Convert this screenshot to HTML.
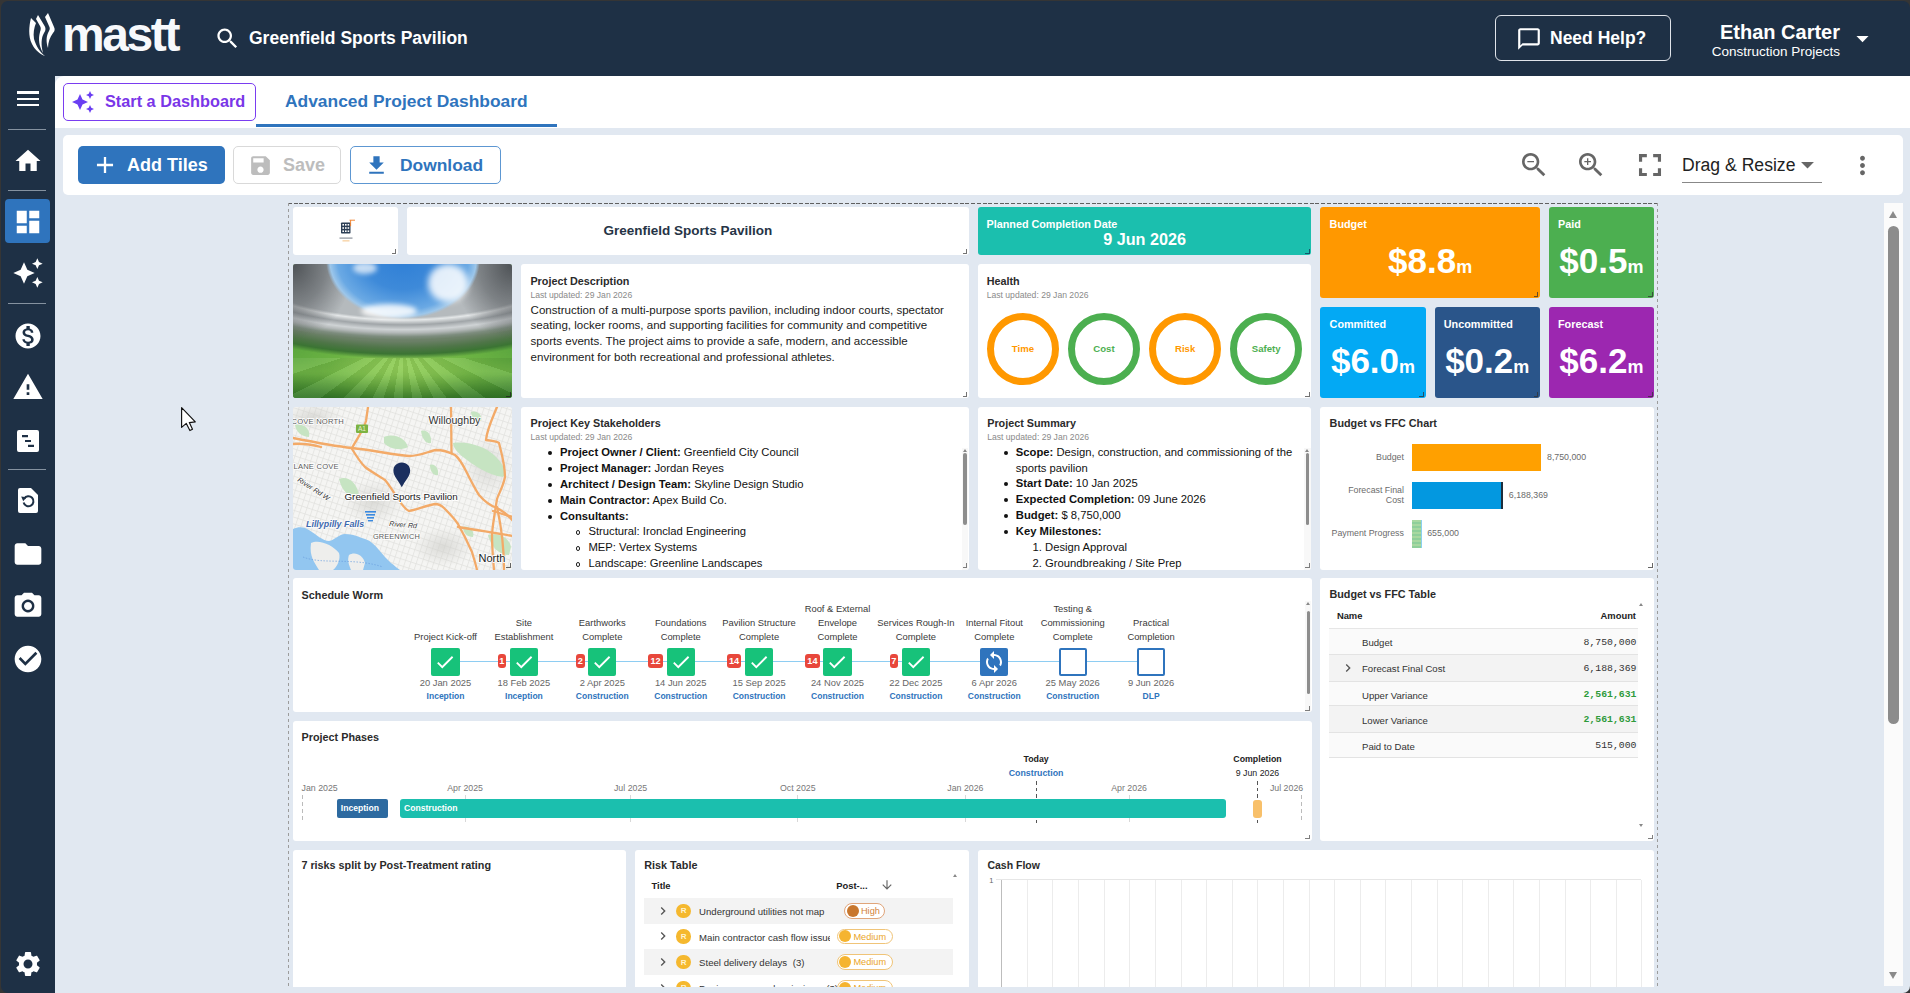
<!DOCTYPE html>
<html><head><meta charset="utf-8">
<style>
*{box-sizing:border-box;margin:0;padding:0}
html,body{width:1910px;height:993px;overflow:hidden;background:#353535;font-family:"Liberation Sans",sans-serif}
#app{position:absolute;left:0;top:0;width:1910px;height:993px;background:#e1e8f1;overflow:hidden}
#frame{position:absolute;left:1px;top:1px;width:1909px;height:992px;border-radius:7px;box-shadow:0 0 0 30px #353535;z-index:100;pointer-events:none}
.abs{position:absolute}
#hdr{position:absolute;left:0;top:0;width:1910px;height:76px;background:#1e3045}
#side{position:absolute;left:0;top:76px;width:55px;height:917px;background:#1e3045}
svg{display:block}
.ic{position:absolute}
.div{position:absolute;left:8px;width:38px;height:1px;background:#8592a0}
#tabs{position:absolute;left:55px;top:76px;width:1855px;height:52px;background:#fff;border-top-left-radius:9px}
#tb{position:absolute;left:63px;top:135px;width:1840px;height:60px;background:#fff;border-radius:5px}
.btn{position:absolute;border-radius:4px;font-size:18px;font-weight:bold;display:flex;align-items:center}
#dash{display:none}
.t{position:absolute;background:#fff;border-radius:3px;overflow:hidden}
.ttl{position:absolute;left:9px;top:10px;font-size:12px;font-weight:bold;color:#2b2b2b}
.upd{position:absolute;left:9px;top:25px;font-size:9.5px;color:#8a8a8a}
.tx{position:absolute;white-space:nowrap}
.rz{position:absolute;right:1.5px;bottom:1.5px;width:4.8px;height:4.8px;border-right:1.8px solid #555;border-bottom:1.8px solid #555;opacity:0.75}
</style></head><body>
<div id="app">
 <div id="hdr">
  <svg class="ic" style="left:28px;top:12px" width="30" height="46" viewBox="0 0 30 46">
   <path d="M3 6 C1 14 0 24 4 32 C7 38 12 42 17 44 C12 40 8 34 6 27 C5 21 6 16 8 11 Z" fill="#fff"/>
   <path d="M8 7 L10 3 L16 13 C18 16 18 18 16 21 C13 26 13 33 15 41 C11 34 10 27 12 20 C13 17 13 16 12 14 Z" fill="#fff"/>
   <path d="M17 5 L20 1 L26 15 C27 17 27 19 25 21 C22 25 20 30 20 36 C18 30 18 24 21 19 C22 17 22 16 21 14 Z" fill="#fff"/>
  </svg>
  <div class="abs" style="left:62px;top:7px;font-size:48px;font-weight:bold;color:#f7f9fc;letter-spacing:-2.4px;line-height:56px">mastt</div>
  <svg class="ic" style="left:214px;top:25px" width="27" height="27" viewBox="0 0 24 24"><path fill="#fff" d="M15.5 14h-.79l-.28-.27C15.41 12.59 16 11.11 16 9.5 16 5.91 13.09 3 9.5 3S3 5.91 3 9.5 5.91 16 9.5 16c1.61 0 3.09-.59 4.23-1.57l.27.28v.79l5 4.99L20.49 19l-4.99-5zm-6 0C7.01 14 5 11.99 5 9.5S7.01 5 9.5 5 14 7.01 14 9.5 11.99 14 9.5 14z"/></svg>
  <div class="abs" style="left:249px;top:27px;font-size:17.5px;font-weight:bold;color:#fff;line-height:22px">Greenfield Sports Pavilion</div>
  <div class="abs" style="left:1495px;top:15px;width:176px;height:46px;border:1.2px solid #e0e4ea;border-radius:6px"></div>
  <svg class="ic" style="left:1516px;top:26px" width="26" height="26" viewBox="0 0 24 24"><path fill="#fff" d="M20 2H4c-1.1 0-2 .9-2 2v18l4-4h14c1.1 0 2-.9 2-2V4c0-1.1-.9-2-2-2zm0 14H6l-2 2V4h16v12z"/></svg>
  <div class="abs" style="left:1550px;top:27px;font-size:17.5px;font-weight:bold;color:#fff;line-height:22px">Need Help?</div>
  <div class="abs" style="right:70px;top:20px;font-size:20px;font-weight:bold;color:#fff;line-height:24px;text-align:right">Ethan Carter</div>
  <div class="abs" style="right:70px;top:44px;font-size:13.5px;color:#fff;line-height:16px;text-align:right;">Construction Projects</div>
  <svg class="ic" style="left:1848px;top:24px" width="29" height="29" viewBox="0 0 24 24"><path fill="#fff" d="M7 10l5 5 5-5z"/></svg>
 </div>
 <div id="side">
  <div class="abs" style="left:17px;top:15px;width:22px;height:2.6px;background:#fff"></div><div class="abs" style="left:17px;top:21.5px;width:22px;height:2.6px;background:#fff"></div><div class="abs" style="left:17px;top:27.6px;width:22px;height:2.6px;background:#fff"></div>
  <div class="div" style="top:53px"></div>
  <svg class="ic" style="left:13px;top:70px" width="30" height="30" viewBox="0 0 24 24"><path fill="#fff" d="M10 20v-6h4v6h5v-8h3L12 3 2 12h3v8z"/></svg>
  <div class="div" style="top:114px"></div>
  <div class="abs" style="left:5px;top:123px;width:45px;height:44px;background:#2f74bd;border-radius:4px"></div>
  <svg class="ic" style="left:13px;top:131px" width="30" height="30" viewBox="0 0 24 24"><path fill="#fff" d="M3 13h8V3H3v10zm0 8h8v-6H3v6zm10 0h8V11h-8v10zm0-18v6h8V3h-8z"/></svg>
  <svg class="ic" style="left:12px;top:181px" width="32" height="32" viewBox="0 0 24 24"><path fill="#fff" d="M19 9l1.25-2.75L23 5l-2.75-1.25L19 1l-1.25 2.75L15 5l2.75 1.25L19 9zm-7.5.5L9 4 6.5 9.5 1 12l5.5 2.5L9 20l2.5-5.5L17 12l-5.5-2.5zM19 15l-1.25 2.75L15 19l2.75 1.25L19 23l1.25-2.75L23 19l-2.75-1.25L19 15z"/></svg>
  <div class="div" style="top:227px"></div>
  <svg class="ic" style="left:13px;top:245px" width="30" height="30" viewBox="0 0 24 24"><path fill="#fff" d="M12 2C6.48 2 2 6.48 2 12s4.48 10 10 10 10-4.48 10-10S17.52 2 12 2zm1.41 16.09V20h-2.67v-1.93c-1.71-.36-3.16-1.46-3.27-3.4h1.96c.1 1.05.82 1.87 2.650 1.87 1.96 0 2.4-.98 2.4-1.59 0-.83-.44-1.61-2.67-2.14-2.48-.6-4.18-1.62-4.18-3.67 0-1.72 1.39-2.84 3.11-3.21V4h2.67v1.95c1.86.45 2.79 1.86 2.85 3.39H14.3c-.05-1.11-.64-1.870-2.22-1.87-1.5 0-2.4.68-2.4 1.64 0 .84.65 1.39 2.67 1.91s4.18 1.39 4.18 3.91c-.01 1.83-1.38 2.83-3.12 3.16z"/></svg>
  <svg class="ic" style="left:12px;top:295px" width="32" height="32" viewBox="0 0 24 24"><path fill="#fff" d="M1 21h22L12 2 1 21zm12-3h-2v-2h2v2zm0-4h-2v-4h2v4z"/></svg>
  <svg class="ic" style="left:17px;top:354px" width="22" height="22" viewBox="0 0 22 22"><path fill="#fff" fill-rule="evenodd" d="M2 0h18a2 2 0 0 1 2 2v18a2 2 0 0 1-2 2H2a2 2 0 0 1-2-2V2a2 2 0 0 1 2-2zM5 5v2.2h6V5zM8 9.9v2.2h6V9.9zM11 14.8v2.2h6v-2.2z"/></svg>
  <div class="div" style="top:393px"></div>
  <svg class="ic" style="left:18px;top:411.5px" width="20" height="25" viewBox="0 0 20 25"><path fill="#fff" d="M2 0h11l7 7v16a2 2 0 0 1-2 2H2a2 2 0 0 1-2-2V2a2 2 0 0 1 2-2z"/><path d="M6.2 10.6 A5 5 0 1 1 5.6 14.5" fill="none" stroke="#1e3045" stroke-width="2"/><path d="M3.2 8.6 L8.6 9.2 L5.2 13.2 Z" fill="#1e3045"/></svg>
  <svg class="ic" style="left:12px;top:462px" width="32" height="32" viewBox="0 0 24 24"><path fill="#fff" d="M10 4H4c-1.1 0-1.99.9-1.99 2L2 18c0 1.1.9 2 2 2h16c1.1 0 2-.9 2-2V8c0-1.1-.9-2-2-2h-8l-2-2z"/></svg>
  <svg class="ic" style="left:12px;top:514px" width="32" height="32" viewBox="0 0 24 24"><path fill="#fff" fill-rule="evenodd" d="M9 2L7.17 4H4c-1.1 0-2 .9-2 2v12c0 1.1.9 2 2 2h16c1.1 0 2-.9 2-2V6c0-1.1-.9-2-2-2h-3.17L15 2H9zm3 5.2a4.8 4.8 0 1 0 0.001 0zm0 1.8a3 3 0 1 1-0.001 0z"/></svg>
  <svg class="ic" style="left:12px;top:567px" width="32" height="32" viewBox="0 0 24 24"><path fill="#fff" d="M12 2C6.48 2 2 6.48 2 12s4.48 10 10 10 10-4.48 10-10S17.52 2 12 2zm-2 15l-5-5 1.41-1.41L10 14.17l7.59-7.59L19 8l-9 9z"/></svg>
  <svg class="ic" style="left:13px;top:873px" width="30" height="30" viewBox="0 0 24 24"><path fill="#fff" d="M19.14 12.94c.04-.3.06-.61.06-.94 0-.32-.02-.64-.07-.94l2.030-1.58c.18-.14.23-.41.12-.61l-1.92-3.32c-.12-.22-.37-.29-.59-.22l-2.39.96c-.5-.38-1.03-.7-1.62-.94l-.36-2.54c-.04-.24-.24-.41-.48-.41h-3.84c-.24 0-.43.17-.47.41l-.36 2.540c-.59.24-1.13.57-1.62.94l-2.39-.96c-.22-.08-.47 0-.59.22L2.74 8.87c-.12.21-.08.47.12.61l2.03 1.58c-.05.3-.09.63-.09.94s.02.64.07.94l-2.03 1.58c-.18.14-.23.41-.12.61l1.92 3.32c.12.22.37.29.59.22l2.39-.96c.5.38 1.03.7 1.62.94l.36 2.54c.05.24.24.41.48.41h3.84c.24 0 .44-.17.47-.41l.36-2.54c.59-.24 1.13-.56 1.62-.94l2.39.96c.22.08.47 0 .59-.22l1.92-3.32c.12-.22.07-.47-.12-.61l-2.01-1.58zM12 15.6c-1.98 0-3.6-1.62-3.6-3.6s1.62-3.6 3.6-3.6 3.6 1.62 3.6 3.6-1.62 3.6-3.6 3.6z"/></svg>
 </div>
 <div id="tabs"></div>
 <div class="abs" style="left:63px;top:83px;width:193px;height:38px;border:1.3px solid #7a3df0;border-radius:5px"></div>
 <svg class="ic" style="left:71px;top:90px" width="24" height="24" viewBox="0 0 24 24"><path fill="#6a3ef2" d="M19 9l1.25-2.75L23 5l-2.75-1.25L19 1l-1.25 2.75L15 5l2.75 1.25L19 9zm-7.5.5L9 4 6.5 9.5 1 12l5.5 2.5L9 20l2.5-5.5L17 12l-5.5-2.5zM19 15l-1.25 2.75L15 19l2.75 1.25L19 23l1.25-2.75L23 19l-2.75-1.25L19 15z"/></svg>
 <div class="abs" style="left:105px;top:91px;font-size:16.3px;font-weight:bold;color:#7a36e8;line-height:20px">Start a Dashboard</div>
 <div class="abs" style="left:285px;top:91px;font-size:17.4px;font-weight:bold;color:#2f74bd;line-height:20px">Advanced Project Dashboard</div>
 <div class="abs" style="left:256px;top:124px;width:301px;height:3px;background:#2f74bd"></div>
 <div id="tb"></div>
 <div class="abs" style="left:78px;top:146px;width:147px;height:38px;background:#2f74bd;border-radius:5px"></div>
 <svg class="ic" style="left:93px;top:153px" width="24" height="24" viewBox="0 0 24 24"><path fill="#fff" d="M19 13h-6v6h-2v-6H5v-2h6V5h2v6h6v2z" transform="translate(12 12) scale(1.15 1.15) translate(-12 -12)"/></svg>
 <div class="abs" style="left:127px;top:155px;font-size:18px;font-weight:bold;color:#fff;line-height:20px">Add Tiles</div>
 <div class="abs" style="left:233px;top:146px;width:108px;height:38px;border:1px solid #d9d9d9;border-radius:5px"></div>
 <svg class="ic" style="left:248px;top:153px" width="25" height="25" viewBox="0 0 24 24"><path fill="#bdbdbd" d="M17 3H5c-1.11 0-2 .9-2 2v14c0 1.1.89 2 2 2h14c1.1 0 2-.9 2-2V7l-4-4zm-5 16c-1.66 0-3-1.34-3-3s1.34-3 3-3 3 1.34 3 3-1.34 3-3 3zm3-10H5V5h10v4z"/></svg>
 <div class="abs" style="left:283px;top:155px;font-size:18px;font-weight:bold;color:#bdbdbd;line-height:20px">Save</div>
 <div class="abs" style="left:350px;top:146px;width:151px;height:38px;border:1px solid #5d97d2;border-radius:5px"></div>
 <svg class="ic" style="left:364px;top:153px" width="25" height="25" viewBox="0 0 24 24"><path fill="#2f74bd" d="M19 9h-4V3H9v6H5l7 7 7-7zM5 18v2h14v-2H5z"/></svg>
 <div class="abs" style="left:400px;top:155px;font-size:17.4px;font-weight:bold;color:#2f74bd;line-height:20px">Download</div>
 <svg class="ic" style="left:1518px;top:149px" width="32" height="32" viewBox="0 0 24 24"><path fill="#666" d="M15.5 14h-.79l-.28-.27C15.41 12.59 16 11.11 16 9.5 16 5.91 13.09 3 9.5 3S3 5.910 3 9.5 5.91 16 9.5 16c1.61 0 3.09-.59 4.23-1.57l.27.28v.79l5 4.99L20.49 19l-4.99-5zm-6 0C7.01 14 5 11.99 5 9.5S7.01 5 9.5 5 14 7.01 14 9.5 11.99 14 9.5 14zM7 9h5v1H7z"/></svg>
 <svg class="ic" style="left:1575px;top:149px" width="32" height="32" viewBox="0 0 24 24"><path fill="#666" d="M15.5 14h-.79l-.28-.27C15.41 12.59 16 11.11 16 9.5 16 5.91 13.09 3 9.5 3S3 5.91 3 9.5 5.91 16 9.5 16c1.61 0 3.09-.59 4.23-1.57l.27.28v.79l5 4.99L20.49 19l-4.99-5zm-6 0C7.01 14 5 11.99 5 9.5S7.01 5 9.5 5 14 7.01 14 9.5 11.99 14 9.5 14zm2.5-4h-2v2H9v-2H7V9h2V7h1v2h2v1z"/></svg>
 <svg class="ic" style="left:1629px;top:144px" width="42" height="42" viewBox="0 0 24 24"><path fill="#666" d="M7 14H5v5h5v-2H7v-3zm-2-4h2V7h3V5H5v5zm12 7h-3v2h5v-5h-2v3zM14 5v2h3v3h2V5h-5z" transform="translate(12 12) scale(0.9) translate(-12 -12)"/></svg>
 <div class="abs" style="left:1682px;top:155px;font-size:17.6px;color:#222;line-height:20px">Drag &amp; Resize</div>
 <svg class="ic" style="left:1791.7px;top:149.4px" width="31" height="31" viewBox="0 0 24 24"><path fill="#666" d="M7 10l5 5 5-5z"/></svg>
 <div class="abs" style="left:1682px;top:182px;width:140px;height:1px;background:#888"></div>
 <svg class="ic" style="left:1848px;top:151px" width="29" height="29" viewBox="0 0 24 24"><path fill="#666" d="M12 8c1.1 0 2-.9 2-2s-.9-2-2-2-2 .9-2 2 .9 2 2 2zm0 2c-1.1 0-2 .9-2 2s.9 2 2 2 2-.9 2-2-.9-2-2-2zm0 6c-1.1 0-2 .9-2 2s.9 2 2 2 2-.9 2-2-.9-2-2-2z"/></svg>
 <div id="dash"></div>
<div class="t" style="left:292.50px;top:207.10px;width:105.40px;height:48.32px;background:#fff;">
<svg class="abs" style="left:44px;top:12px" width="22" height="26" viewBox="0 0 22 26">
<rect x="4" y="3.5" width="9.5" height="11" rx="0.8" fill="#2c3e55"/>
<g fill="#fff"><rect x="5.4" y="5" width="1.6" height="1.6"/><rect x="8" y="5" width="1.6" height="1.6"/><rect x="10.6" y="5" width="1.6" height="1.6"/>
<rect x="5.4" y="8.2" width="1.6" height="1.6"/><rect x="8" y="8.2" width="1.6" height="1.6"/><rect x="10.6" y="8.2" width="1.6" height="1.6"/>
<rect x="5.4" y="11.4" width="1.6" height="1.6"/><rect x="8" y="11.4" width="1.6" height="1.6"/><rect x="10.6" y="11.4" width="1.6" height="1.6"/></g>
<path d="M12.5 1.2h5.5M13.6 1.2v6" stroke="#f07a20" stroke-width="0.9"/>
<rect x="2.5" y="18.5" width="13" height="1.2" fill="#55606e" opacity="0.7"/>
<rect x="5.5" y="21.5" width="7" height="0.8" fill="#f0a040" opacity="0.8"/>
</svg>
<div class="rz" style="border-color:#444"></div>
</div>
<div class="t" style="left:406.70px;top:207.10px;width:562.20px;height:48.32px;background:#fff;">
<div class="tx" style="left:-118.90px;width:800px;text-align:center;top:17.17px;font-size:13.5px;line-height:13.5px;font-weight:bold;color:#263446;">Greenfield Sports Pavilion</div>
<div class="rz" style="border-color:#444"></div>
</div>
<div class="t" style="left:977.70px;top:207.10px;width:333.80px;height:48.32px;background:#1bbfae;">
<div class="tx" style="left:8.80px;top:11.76px;font-size:10.8px;line-height:10.8px;font-weight:bold;color:#fff;">Planned Completion Date</div>
<div class="tx" style="left:-233.10px;width:800px;text-align:center;top:24.19px;font-size:16.2px;line-height:16.2px;font-weight:bold;color:#fff;">9 Jun 2026</div>
<div class="rz" style="border-color:#135"></div>
</div>
<div class="t" style="left:1320.30px;top:207.10px;width:219.60px;height:91.16px;background:#ff9800;">
<div class="tx" style="left:9.30px;top:11.76px;font-size:10.8px;line-height:10.8px;font-weight:bold;color:#fff;">Budget</div>
<div class="tx" style="left:-290.20px;width:800px;text-align:center;top:36.07px;font-size:35px;line-height:35px;font-weight:bold;color:#fff;">$8.8<span style="font-size:18px">m</span></div>
<div class="rz" style="border-color:#333"></div>
</div>
<div class="t" style="left:1548.70px;top:207.10px;width:105.40px;height:91.16px;background:#4caf50;">
<div class="tx" style="left:9.30px;top:11.76px;font-size:10.8px;line-height:10.8px;font-weight:bold;color:#fff;">Paid</div>
<div class="tx" style="left:-347.30px;width:800px;text-align:center;top:36.07px;font-size:35px;line-height:35px;font-weight:bold;color:#fff;">$0.5<span style="font-size:18px">m</span></div>
<div class="rz" style="border-color:#333"></div>
</div>
<div class="t" style="left:1320.30px;top:307.06px;width:105.40px;height:91.16px;background:#03a9f4;">
<div class="tx" style="left:9.30px;top:11.76px;font-size:10.8px;line-height:10.8px;font-weight:bold;color:#fff;">Committed</div>
<div class="tx" style="left:-347.30px;width:800px;text-align:center;top:36.07px;font-size:35px;line-height:35px;font-weight:bold;color:#fff;">$6.0<span style="font-size:18px">m</span></div>
<div class="rz" style="border-color:#333"></div>
</div>
<div class="t" style="left:1434.50px;top:307.06px;width:105.40px;height:91.16px;background:#2a558a;">
<div class="tx" style="left:9.30px;top:11.76px;font-size:10.8px;line-height:10.8px;font-weight:bold;color:#fff;">Uncommitted</div>
<div class="tx" style="left:-347.30px;width:800px;text-align:center;top:36.07px;font-size:35px;line-height:35px;font-weight:bold;color:#fff;">$0.2<span style="font-size:18px">m</span></div>
<div class="rz" style="border-color:#333"></div>
</div>
<div class="t" style="left:1548.70px;top:307.06px;width:105.40px;height:91.16px;background:#9c27b0;">
<div class="tx" style="left:9.30px;top:11.76px;font-size:10.8px;line-height:10.8px;font-weight:bold;color:#fff;">Forecast</div>
<div class="tx" style="left:-347.30px;width:800px;text-align:center;top:36.07px;font-size:35px;line-height:35px;font-weight:bold;color:#fff;">$6.2<span style="font-size:18px">m</span></div>
<div class="rz" style="border-color:#333"></div>
</div>
<div class="t" style="left:292.50px;top:264.22px;width:219.60px;height:134.00px;background:#4d8f3c;">
<div class="abs" style="left:0;top:0;width:100%;height:100%;background:
 radial-gradient(ellipse 77px 59px at 110px -4px, #2f7fd6 0%, #3e8ad9 50%, #6aa9e4 85%, #9cc6ea 95%, rgba(180,200,215,0) 100%),
 radial-gradient(ellipse 60px 75px at 0px 0px, rgba(60,64,68,0.85) 0%, rgba(80,84,88,0.55) 55%, rgba(80,84,88,0) 100%),
 radial-gradient(ellipse 60px 75px at 219px 0px, rgba(60,64,68,0.85) 0%, rgba(80,84,88,0.55) 55%, rgba(80,84,88,0) 100%),
 radial-gradient(ellipse 227px 80px at 110px -4px, #b5babd 0%, #b5babd 72%, #e4e7e8 75%, #a0a5a8 81%, #cfd3d5 87%, #b3b8b8 91%, #7d8c7e 96%, rgba(110,135,110,0) 100%),
 radial-gradient(ellipse 250px 99px at 110px -4px, #6c8068 0%, #6c8068 82%, #4f7548 89%, #3b7433 95%, rgba(60,120,50,0) 100%),
 radial-gradient(ellipse 120px 40px at 110px 102px, #90cc58 0%, rgba(120,190,70,0.5) 60%, rgba(100,170,60,0) 100%),
 linear-gradient(180deg, #4f9a3a 0%, #5ea83f 72%, #6cb245 80%, #3f8a2e 100%)"></div>
<div class="abs" style="left:0;top:94px;width:100%;height:40px;background:repeating-conic-gradient(from 90deg at 110px -20px, rgba(255,255,255,0.07) 0deg 9deg, rgba(0,0,0,0.06) 9deg 18deg), radial-gradient(ellipse 90px 45px at 110px 0px, rgba(150,210,90,0.5), rgba(150,210,90,0) 100%), linear-gradient(180deg, rgba(0,0,0,0) 40%, rgba(20,70,20,0.3) 100%)"></div>
<div class="abs" style="left:135px;top:0px;width:40px;height:38px;border-radius:50%;background:rgba(255,255,255,0.85);filter:blur(3px)"></div>
<div class="abs" style="left:60px;top:-2px;width:24px;height:12px;border-radius:50%;background:rgba(255,255,255,0.7);filter:blur(2.5px)"></div>
<div class="abs" style="left:68px;top:40px;width:56px;height:14px;border-radius:50%;background:rgba(255,255,255,0.85);filter:blur(2.5px)"></div>

<div class="rz" style="border-color:#222"></div>
</div>
<div class="t" style="left:520.90px;top:264.22px;width:448.00px;height:134.00px;background:#fff;">
<div class="tx" style="left:9.50px;top:12.14px;font-size:10.8px;line-height:10.8px;font-weight:bold;color:#2b2b2b;">Project Description</div>
<div class="tx" style="left:9.50px;top:26.80px;font-size:8.6px;line-height:8.6px;font-weight:normal;color:#8a8a8a;">Last updated: 29 Jan 2026</div>
<div class="tx" style="left:9.70px;top:40.30px;font-size:11.55px;line-height:11.55px;font-weight:normal;color:#1a1a1a;">Construction of a multi-purpose sports pavilion, including indoor courts, spectator</div>
<div class="tx" style="left:9.70px;top:56.20px;font-size:11.55px;line-height:11.55px;font-weight:normal;color:#1a1a1a;">seating, locker rooms, and supporting facilities for community and competitive</div>
<div class="tx" style="left:9.70px;top:72.10px;font-size:11.55px;line-height:11.55px;font-weight:normal;color:#1a1a1a;">sports events. The project aims to provide a safe, modern, and accessible</div>
<div class="tx" style="left:9.70px;top:88.00px;font-size:11.55px;line-height:11.55px;font-weight:normal;color:#1a1a1a;">environment for both recreational and professional athletes.</div>
<div class="rz" style="border-color:#444"></div>
</div>
<div class="t" style="left:977.70px;top:264.22px;width:333.80px;height:134.00px;background:#fff;">
<div class="tx" style="left:9.00px;top:11.54px;font-size:10.8px;line-height:10.8px;font-weight:bold;color:#2b2b2b;">Health</div>
<div class="tx" style="left:9.00px;top:26.80px;font-size:8.6px;line-height:8.6px;font-weight:normal;color:#8a8a8a;">Last updated: 29 Jan 2026</div>
<div class="abs" style="left:9.20px;top:48.78px;width:72.00px;height:72.00px;border-radius:50%;border:7.6px solid #ff9800;box-sizing:border-box"></div>
<div class="tx" style="left:-354.80px;width:800px;text-align:center;top:80.05px;font-size:9.6px;line-height:9.6px;font-weight:bold;color:#ff9800;">Time</div>
<div class="abs" style="left:90.30px;top:48.78px;width:72.00px;height:72.00px;border-radius:50%;border:7.6px solid #4caf50;box-sizing:border-box"></div>
<div class="tx" style="left:-273.70px;width:800px;text-align:center;top:80.05px;font-size:9.6px;line-height:9.6px;font-weight:bold;color:#4caf50;">Cost</div>
<div class="abs" style="left:171.40px;top:48.78px;width:72.00px;height:72.00px;border-radius:50%;border:7.6px solid #ff9800;box-sizing:border-box"></div>
<div class="tx" style="left:-192.60px;width:800px;text-align:center;top:80.05px;font-size:9.6px;line-height:9.6px;font-weight:bold;color:#ff9800;">Risk</div>
<div class="abs" style="left:252.50px;top:48.78px;width:72.00px;height:72.00px;border-radius:50%;border:7.6px solid #4caf50;box-sizing:border-box"></div>
<div class="tx" style="left:-111.50px;width:800px;text-align:center;top:80.05px;font-size:9.6px;line-height:9.6px;font-weight:bold;color:#4caf50;">Safety</div>
<div class="rz" style="border-color:#444"></div>
</div>
<div class="t" style="left:292.50px;top:407.02px;width:219.60px;height:162.56px;background:#f1f1ee;">
<svg class="abs" style="left:0;top:0" width="220" height="163" viewBox="0 0 220 163">
 <defs>
  <pattern id="st" width="5.5" height="6.5" patternUnits="userSpaceOnUse" patternTransform="rotate(18)"><rect width="5.5" height="6.5" fill="#f5f5f3"/><path d="M0 0.5H5.5M0.5 0V6.5" stroke="#e0e0dc" stroke-width="0.7"/></pattern>
  <radialGradient id="sh1" cx="0.5" cy="0.5" r="0.5"><stop offset="0" stop-color="#d0d0cc" stop-opacity="0.7"/><stop offset="1" stop-color="#d0d0cc" stop-opacity="0"/></radialGradient>
 </defs>
 <rect width="220" height="163" fill="url(#st)"/>
 <ellipse cx="20" cy="10" rx="30" ry="14" fill="url(#sh1)"/>
 <ellipse cx="195" cy="60" rx="25" ry="30" fill="url(#sh1)"/>
 <ellipse cx="150" cy="140" rx="30" ry="20" fill="url(#sh1)"/>
 <ellipse cx="80" cy="95" rx="30" ry="22" fill="url(#sh1)"/>
 <g fill="#c6e4c2">
  <path d="M91 30 C100 26 112 30 115 40 C108 44 96 42 91 36Z"/>
  <path d="M128 24 C134 22 139 28 138 36 C133 37 129 32 128 24Z"/>
  <path d="M160 36 C175 34 195 40 205 52 C212 60 214 66 210 70 C195 68 180 58 170 50 C164 45 160 40 160 36Z"/>
  <path d="M195 128 C205 125 216 130 218 140 L216 148 C206 148 198 140 195 128Z"/>
  <path d="M46 72 C55 68 64 76 66 88 C60 92 50 88 46 72Z"/>
  <path d="M137 58 C142 56 146 62 145 68 C140 69 137 64 137 58Z"/>
  <path d="M2 18 C10 16 18 22 16 30 C9 30 3 25 2 18Z"/>
  <path d="M178 5 C184 3 190 8 188 14 C182 14 178 10 178 5Z"/>
  <path d="M25 140 C32 136 40 142 38 150 C31 151 26 147 25 140Z"/>
  <path d="M170 120 C176 118 182 124 180 130 C174 130 170 126 170 120Z"/>
 </g>
 <path d="M0 122 C6 119 12 120 16 123 C24 128 30 134 36 134 C42 133 46 127 52 127 C60 127 66 130 72 132 C78 134 82 138 86 143 C90 148 94 152 98 156 C102 159 104 161 107 163 L0 163Z" fill="#92c6f0"/>
 <path d="M18 136 C26 132 40 138 46 146 C48 152 44 160 40 163 L26 163 C22 156 16 150 18 136Z" fill="#eeeeec"/>
 <path d="M56 148 C62 144 70 148 72 156 L70 163 L58 163 C56 158 54 153 56 148Z" fill="#eeeeec"/>
 <path d="M10 150 C30 158 60 150 90 160" stroke="#6a9fe0" stroke-width="0.7" stroke-dasharray="1.5 1.5" fill="none"/>
 <g fill="none" stroke="#f3aa68" stroke-width="2.3" stroke-linecap="round" stroke-linejoin="round">
  <path d="M0 31 C20 35 40 39 59 41 C80 43 100 48 116 49 C128 49 136 44 143 43 C152 43 158 46 162 48 C167 52 170 58 173 64 C178 74 182 82 186 88 C192 95 198 99 204 101 C210 104 215 108 220 114"/>
  <path d="M0 37 C10 36 20 38 28 40"/>
  <path d="M59 41 C64 32 70 24 73 14 L75 0"/>
  <path d="M59 42 C64 50 68 56 72 60 C80 66 88 70 92 73 C98 80 102 88 106 93 C109 98 112 102 116 104 C125 102 135 98 142 97 C146 97 149 99 151 101 C156 106 161 111 165 117 C170 126 175 136 179 145 C181 152 183 158 184 163"/>
  <path d="M158 0 L158.5 46"/>
  <path d="M204 0 C200 10 194 22 193 33 C198 34 203 34 206 36 C209 48 212 58 212 70 C210 80 206 86 204 92 C202 104 200 116 199 127 C199 140 200 152 201 163"/>
  <path d="M165 120 C180 122 200 126 220 129"/>
  <path d="M204 100 C208 118 211 140 211 163"/>
  <path d="M200 104 C206 106 212 108 220 110"/>
 </g>
 <rect x="63" y="17.5" width="12" height="8.5" rx="1" fill="#7cb342"/>
 <text x="69" y="24.3" font-size="6.5" font-family="Liberation Sans" fill="#e8f0d0" text-anchor="middle">A1</text>
 <g font-family="Liberation Sans" fill="#5a5a5a">
  <text x="-1.5" y="16.5" font-size="7.6" letter-spacing="0.2" stroke="#fff" stroke-width="1.5" paint-order="stroke">COVE NORTH</text>
  <text x="0.5" y="62" font-size="7.6" letter-spacing="0.2" stroke="#fff" stroke-width="1.5" paint-order="stroke">LANE COVE</text>
  <text x="4" y="74" font-size="7.2" fill="#333" font-style="italic" transform="rotate(33 4 74)" stroke="#fff" stroke-width="1.5" paint-order="stroke">River Rd W</text>
  <text x="96" y="119" font-size="7.2" fill="#333" font-style="italic" transform="rotate(5 96 119)" stroke="#fff" stroke-width="1.5" paint-order="stroke">River Rd</text>
  <text x="80" y="131.5" font-size="7.4" letter-spacing="0.1" stroke="#fff" stroke-width="1.5" paint-order="stroke">GREENWICH</text>
 </g>
 <text x="135.5" y="16.5" font-size="10.6" font-family="Liberation Sans" fill="#333" stroke="#fff" stroke-width="1.5" paint-order="stroke">Willoughby</text>
 <text x="185.5" y="155" font-size="11" font-family="Liberation Sans" fill="#222" stroke="#fff" stroke-width="1.5" paint-order="stroke">North</text>
 <text x="13" y="120" font-size="8.9" font-family="Liberation Sans" fill="#3d68ad" font-style="italic" font-weight="bold" stroke="#fff" stroke-width="1.2" paint-order="stroke">Lillypilly Falls</text>
 <g fill="#3a8ae0"><rect x="72" y="104" width="11" height="1.6"/><rect x="73" y="107" width="9" height="1.6"/><rect x="74" y="110" width="7" height="1.6"/><rect x="75" y="113" width="5" height="1.4"/></g>
 <text x="51.5" y="92.5" font-size="9.8" font-family="Liberation Sans" fill="#1a1a1a" stroke="#fff" stroke-width="1.8" paint-order="stroke">Greenfield Sports Pavilion</text>
 <path d="M108.8 55.6 C103.6 55.6 100.4 59.4 100.4 63.6 C100.4 69.5 105 73 108.8 80.3 C112.6 73 117.2 69.5 117.2 63.6 C117.2 59.4 114 55.6 108.8 55.6Z" fill="#1b2f5e"/>
</svg>
<div class="rz" style="border-color:#333"></div>
</div>
<div class="t" style="left:520.90px;top:407.02px;width:448.00px;height:162.56px;background:#fff;">
<div class="tx" style="left:9.70px;top:10.64px;font-size:10.8px;line-height:10.8px;font-weight:bold;color:#2b2b2b;">Project Key Stakeholders</div>
<div class="tx" style="left:9.70px;top:25.50px;font-size:8.6px;line-height:8.6px;font-weight:normal;color:#8a8a8a;">Last updated: 29 Jan 2026</div>
<div class="abs" style="left:26.70px;top:44.18px;width:4.20px;height:4.20px;border-radius:50%;background:#111"></div>
<div class="tx" style="left:39.10px;top:40.26px;font-size:11.25px;line-height:11.25px;font-weight:normal;color:#111;"><b>Project Owner / Client:</b> Greenfield City Council</div>
<div class="abs" style="left:26.70px;top:60.18px;width:4.20px;height:4.20px;border-radius:50%;background:#111"></div>
<div class="tx" style="left:39.10px;top:56.26px;font-size:11.25px;line-height:11.25px;font-weight:normal;color:#111;"><b>Project Manager:</b> Jordan Reyes</div>
<div class="abs" style="left:26.70px;top:76.18px;width:4.20px;height:4.20px;border-radius:50%;background:#111"></div>
<div class="tx" style="left:39.10px;top:72.26px;font-size:11.25px;line-height:11.25px;font-weight:normal;color:#111;"><b>Architect / Design Team:</b> Skyline Design Studio</div>
<div class="abs" style="left:26.70px;top:92.18px;width:4.20px;height:4.20px;border-radius:50%;background:#111"></div>
<div class="tx" style="left:39.10px;top:88.26px;font-size:11.25px;line-height:11.25px;font-weight:normal;color:#111;"><b>Main Contractor:</b> Apex Build Co.</div>
<div class="abs" style="left:26.70px;top:108.18px;width:4.20px;height:4.20px;border-radius:50%;background:#111"></div>
<div class="tx" style="left:39.10px;top:104.26px;font-size:11.25px;line-height:11.25px;font-weight:normal;color:#111;"><b>Consultants:</b></div>
<div class="abs" style="left:54.70px;top:123.18px;width:4.60px;height:4.60px;border-radius:50%;border:1px solid #222;box-sizing:border-box"></div>
<div class="tx" style="left:67.50px;top:119.46px;font-size:11.25px;line-height:11.25px;font-weight:normal;color:#111;">Structural: Ironclad Engineering</div>
<div class="abs" style="left:54.70px;top:139.18px;width:4.60px;height:4.60px;border-radius:50%;border:1px solid #222;box-sizing:border-box"></div>
<div class="tx" style="left:67.50px;top:135.46px;font-size:11.25px;line-height:11.25px;font-weight:normal;color:#111;">MEP: Vertex Systems</div>
<div class="abs" style="left:54.70px;top:155.18px;width:4.60px;height:4.60px;border-radius:50%;border:1px solid #222;box-sizing:border-box"></div>
<div class="tx" style="left:67.50px;top:151.46px;font-size:11.25px;line-height:11.25px;font-weight:normal;color:#111;">Landscape: Greenline Landscapes</div>
<div class="abs" style="left:440.80px;top:40.98px;width:6.40px;height:122.00px;background:#f8f8f8"></div>
<div class="abs" style="left:442.00px;top:41.98px;width:0;height:0;border-left:2.2px solid transparent;border-right:2.2px solid transparent;border-bottom:3px solid #888"></div>
<div class="abs" style="left:442.30px;top:46.48px;width:3.40px;height:72.00px;background:#8d8d8d;border-radius:2px"></div>
<div class="rz" style="border-color:#555"></div>
</div>
<div class="t" style="left:977.70px;top:407.02px;width:333.80px;height:162.56px;background:#fff;">
<div class="tx" style="left:9.50px;top:10.94px;font-size:10.8px;line-height:10.8px;font-weight:bold;color:#2b2b2b;">Project Summary</div>
<div class="tx" style="left:9.50px;top:25.50px;font-size:8.6px;line-height:8.6px;font-weight:normal;color:#8a8a8a;">Last updated: 29 Jan 2026</div>
<div class="abs" style="left:26.30px;top:44.18px;width:4.20px;height:4.20px;border-radius:50%;background:#111"></div>
<div class="tx" style="left:38.10px;top:40.26px;font-size:11.25px;line-height:11.25px;font-weight:normal;color:#111;"><b>Scope:</b> Design, construction, and commissioning of the</div>
<div class="tx" style="left:38.10px;top:55.96px;font-size:11.25px;line-height:11.25px;font-weight:normal;color:#111;">sports pavilion</div>
<div class="abs" style="left:26.30px;top:75.08px;width:4.20px;height:4.20px;border-radius:50%;background:#111"></div>
<div class="tx" style="left:38.10px;top:71.16px;font-size:11.25px;line-height:11.25px;font-weight:normal;color:#111;"><b>Start Date:</b> 10 Jan 2025</div>
<div class="abs" style="left:26.30px;top:90.98px;width:4.20px;height:4.20px;border-radius:50%;background:#111"></div>
<div class="tx" style="left:38.10px;top:87.06px;font-size:11.25px;line-height:11.25px;font-weight:normal;color:#111;"><b>Expected Completion:</b> 09 June 2026</div>
<div class="abs" style="left:26.30px;top:106.98px;width:4.20px;height:4.20px;border-radius:50%;background:#111"></div>
<div class="tx" style="left:38.10px;top:103.06px;font-size:11.25px;line-height:11.25px;font-weight:normal;color:#111;"><b>Budget:</b> $ 8,750,000</div>
<div class="abs" style="left:26.30px;top:122.98px;width:4.20px;height:4.20px;border-radius:50%;background:#111"></div>
<div class="tx" style="left:38.10px;top:119.06px;font-size:11.25px;line-height:11.25px;font-weight:normal;color:#111;"><b>Key Milestones:</b></div>
<div class="tx" style="left:54.90px;top:135.16px;font-size:11.25px;line-height:11.25px;font-weight:normal;color:#111;">1. Design Approval</div>
<div class="tx" style="left:54.90px;top:150.76px;font-size:11.25px;line-height:11.25px;font-weight:normal;color:#111;">2. Groundbreaking / Site Prep</div>
<div class="abs" style="left:326.60px;top:40.98px;width:6.40px;height:122.00px;background:#f8f8f8"></div>
<div class="abs" style="left:327.80px;top:41.98px;width:0;height:0;border-left:2.2px solid transparent;border-right:2.2px solid transparent;border-bottom:3px solid #888"></div>
<div class="abs" style="left:328.10px;top:46.48px;width:3.40px;height:71.50px;background:#8d8d8d;border-radius:2px"></div>
<div class="rz" style="border-color:#555"></div>
</div>
<div class="t" style="left:1320.30px;top:407.02px;width:333.80px;height:162.56px;background:#fff;">
<div class="tx" style="left:9.30px;top:11.14px;font-size:10.8px;line-height:10.8px;font-weight:bold;color:#2b2b2b;">Budget vs FFC Chart</div>
<div class="abs" style="left:91.50px;top:36.88px;width:129.50px;height:27.40px;background:#ffa000"></div>
<div class="tx" style="left:-716.40px;width:800px;text-align:right;top:45.83px;font-size:8.8px;line-height:8.8px;font-weight:normal;color:#6b6b6b;">Budget</div>
<div class="tx" style="left:226.70px;top:45.83px;font-size:8.8px;line-height:8.8px;font-weight:normal;color:#6b6b6b;">8,750,000</div>
<div class="abs" style="left:91.50px;top:74.98px;width:89.00px;height:27.00px;background:#0398e0"></div>
<div class="abs" style="left:180.50px;top:74.98px;width:2.60px;height:27.00px;background:#1d2e3c"></div>
<div class="tx" style="left:-716.40px;width:800px;text-align:right;top:78.53px;font-size:8.8px;line-height:8.8px;font-weight:normal;color:#6b6b6b;">Forecast Final</div>
<div class="tx" style="left:-716.40px;width:800px;text-align:right;top:88.73px;font-size:8.8px;line-height:8.8px;font-weight:normal;color:#6b6b6b;">Cost</div>
<div class="tx" style="left:188.50px;top:83.83px;font-size:8.8px;line-height:8.8px;font-weight:normal;color:#6b6b6b;">6,188,369</div>
<div class="abs" style="left:91.50px;top:112.98px;width:9.80px;height:27.60px;background:repeating-linear-gradient(0deg,#8fcf9a 0 2px,#a8d8a0 2px 4px);border-right:1.6px solid #8ad0f0"></div>
<div class="tx" style="left:-716.40px;width:800px;text-align:right;top:121.73px;font-size:8.8px;line-height:8.8px;font-weight:normal;color:#6b6b6b;">Payment Progress</div>
<div class="tx" style="left:106.90px;top:121.73px;font-size:8.8px;line-height:8.8px;font-weight:normal;color:#6b6b6b;">655,000</div>
<div class="rz" style="border-color:#333"></div>
</div>
<div class="t" style="left:292.50px;top:578.38px;width:1019.00px;height:134.00px;background:#fff;">
<div class="tx" style="left:9.10px;top:11.18px;font-size:10.8px;line-height:10.8px;font-weight:bold;color:#2b2b2b;">Schedule Worm</div>
<div class="abs" style="left:153.00px;top:82.42px;width:705.50px;height:1.60px;background:#8ecdf2"></div>
<div class="tx" style="left:-247.00px;width:800px;text-align:center;top:53.36px;font-size:9.4px;line-height:9.4px;font-weight:normal;color:#3a3a3a;">Project Kick-off</div>
<div class="abs" style="left:138.90px;top:69.42px;width:28.20px;height:27.80px;background:#17c27a;border-radius:2px"></div>
<svg class="abs" style="left:141.90px;top:72.42px" width="22" height="22" viewBox="0 0 24 24"><path fill="#fff" d="M9 16.17L4.83 12l-1.42 1.41L9 19 21 7l-1.41-1.41z"/></svg>
<div class="tx" style="left:-247.00px;width:800px;text-align:center;top:99.16px;font-size:9.4px;line-height:9.4px;font-weight:normal;color:#666;">20 Jan 2025</div>
<div class="tx" style="left:-247.00px;width:800px;text-align:center;top:113.62px;font-size:8.5px;line-height:8.5px;font-weight:bold;color:#2f74bd;">Inception</div>
<div class="tx" style="left:-168.60px;width:800px;text-align:center;top:39.36px;font-size:9.4px;line-height:9.4px;font-weight:normal;color:#3a3a3a;">Site</div>
<div class="tx" style="left:-168.60px;width:800px;text-align:center;top:53.36px;font-size:9.4px;line-height:9.4px;font-weight:normal;color:#3a3a3a;">Establishment</div>
<div class="abs" style="left:217.30px;top:69.42px;width:28.20px;height:27.80px;background:#17c27a;border-radius:2px"></div>
<svg class="abs" style="left:220.30px;top:72.42px" width="22" height="22" viewBox="0 0 24 24"><path fill="#fff" d="M9 16.17L4.83 12l-1.42 1.41L9 19 21 7l-1.41-1.41z"/></svg>
<div class="abs" style="left:205.10px;top:76.12px;width:8.60px;height:13.60px;background:#e8473b;border-radius:3px"></div>
<div class="tx" style="left:-190.60px;width:800px;text-align:center;top:78.43px;font-size:9.2px;line-height:9.2px;font-weight:bold;color:#fff;">1</div>
<div class="tx" style="left:-168.60px;width:800px;text-align:center;top:99.16px;font-size:9.4px;line-height:9.4px;font-weight:normal;color:#666;">18 Feb 2025</div>
<div class="tx" style="left:-168.60px;width:800px;text-align:center;top:113.62px;font-size:8.5px;line-height:8.5px;font-weight:bold;color:#2f74bd;">Inception</div>
<div class="tx" style="left:-90.20px;width:800px;text-align:center;top:39.36px;font-size:9.4px;line-height:9.4px;font-weight:normal;color:#3a3a3a;">Earthworks</div>
<div class="tx" style="left:-90.20px;width:800px;text-align:center;top:53.36px;font-size:9.4px;line-height:9.4px;font-weight:normal;color:#3a3a3a;">Complete</div>
<div class="abs" style="left:295.70px;top:69.42px;width:28.20px;height:27.80px;background:#17c27a;border-radius:2px"></div>
<svg class="abs" style="left:298.70px;top:72.42px" width="22" height="22" viewBox="0 0 24 24"><path fill="#fff" d="M9 16.17L4.83 12l-1.42 1.41L9 19 21 7l-1.41-1.41z"/></svg>
<div class="abs" style="left:283.50px;top:76.12px;width:8.60px;height:13.60px;background:#e8473b;border-radius:3px"></div>
<div class="tx" style="left:-112.20px;width:800px;text-align:center;top:78.43px;font-size:9.2px;line-height:9.2px;font-weight:bold;color:#fff;">2</div>
<div class="tx" style="left:-90.20px;width:800px;text-align:center;top:99.16px;font-size:9.4px;line-height:9.4px;font-weight:normal;color:#666;">2 Apr 2025</div>
<div class="tx" style="left:-90.20px;width:800px;text-align:center;top:113.62px;font-size:8.5px;line-height:8.5px;font-weight:bold;color:#2f74bd;">Construction</div>
<div class="tx" style="left:-11.80px;width:800px;text-align:center;top:39.36px;font-size:9.4px;line-height:9.4px;font-weight:normal;color:#3a3a3a;">Foundations</div>
<div class="tx" style="left:-11.80px;width:800px;text-align:center;top:53.36px;font-size:9.4px;line-height:9.4px;font-weight:normal;color:#3a3a3a;">Complete</div>
<div class="abs" style="left:374.10px;top:69.42px;width:28.20px;height:27.80px;background:#17c27a;border-radius:2px"></div>
<svg class="abs" style="left:377.10px;top:72.42px" width="22" height="22" viewBox="0 0 24 24"><path fill="#fff" d="M9 16.17L4.83 12l-1.42 1.41L9 19 21 7l-1.41-1.41z"/></svg>
<div class="abs" style="left:355.70px;top:76.12px;width:14.80px;height:13.60px;background:#e8473b;border-radius:3px"></div>
<div class="tx" style="left:-36.90px;width:800px;text-align:center;top:78.43px;font-size:9.2px;line-height:9.2px;font-weight:bold;color:#fff;">12</div>
<div class="tx" style="left:-11.80px;width:800px;text-align:center;top:99.16px;font-size:9.4px;line-height:9.4px;font-weight:normal;color:#666;">14 Jun 2025</div>
<div class="tx" style="left:-11.80px;width:800px;text-align:center;top:113.62px;font-size:8.5px;line-height:8.5px;font-weight:bold;color:#2f74bd;">Construction</div>
<div class="tx" style="left:66.60px;width:800px;text-align:center;top:39.36px;font-size:9.4px;line-height:9.4px;font-weight:normal;color:#3a3a3a;">Pavilion Structure</div>
<div class="tx" style="left:66.60px;width:800px;text-align:center;top:53.36px;font-size:9.4px;line-height:9.4px;font-weight:normal;color:#3a3a3a;">Complete</div>
<div class="abs" style="left:452.50px;top:69.42px;width:28.20px;height:27.80px;background:#17c27a;border-radius:2px"></div>
<svg class="abs" style="left:455.50px;top:72.42px" width="22" height="22" viewBox="0 0 24 24"><path fill="#fff" d="M9 16.17L4.83 12l-1.42 1.41L9 19 21 7l-1.41-1.41z"/></svg>
<div class="abs" style="left:434.10px;top:76.12px;width:14.80px;height:13.60px;background:#e8473b;border-radius:3px"></div>
<div class="tx" style="left:41.50px;width:800px;text-align:center;top:78.43px;font-size:9.2px;line-height:9.2px;font-weight:bold;color:#fff;">14</div>
<div class="tx" style="left:66.60px;width:800px;text-align:center;top:99.16px;font-size:9.4px;line-height:9.4px;font-weight:normal;color:#666;">15 Sep 2025</div>
<div class="tx" style="left:66.60px;width:800px;text-align:center;top:113.62px;font-size:8.5px;line-height:8.5px;font-weight:bold;color:#2f74bd;">Construction</div>
<div class="tx" style="left:145.00px;width:800px;text-align:center;top:25.36px;font-size:9.4px;line-height:9.4px;font-weight:normal;color:#3a3a3a;">Roof &amp; External</div>
<div class="tx" style="left:145.00px;width:800px;text-align:center;top:39.36px;font-size:9.4px;line-height:9.4px;font-weight:normal;color:#3a3a3a;">Envelope</div>
<div class="tx" style="left:145.00px;width:800px;text-align:center;top:53.36px;font-size:9.4px;line-height:9.4px;font-weight:normal;color:#3a3a3a;">Complete</div>
<div class="abs" style="left:530.90px;top:69.42px;width:28.20px;height:27.80px;background:#17c27a;border-radius:2px"></div>
<svg class="abs" style="left:533.90px;top:72.42px" width="22" height="22" viewBox="0 0 24 24"><path fill="#fff" d="M9 16.17L4.83 12l-1.42 1.41L9 19 21 7l-1.41-1.41z"/></svg>
<div class="abs" style="left:512.50px;top:76.12px;width:14.80px;height:13.60px;background:#e8473b;border-radius:3px"></div>
<div class="tx" style="left:119.90px;width:800px;text-align:center;top:78.43px;font-size:9.2px;line-height:9.2px;font-weight:bold;color:#fff;">14</div>
<div class="tx" style="left:145.00px;width:800px;text-align:center;top:99.16px;font-size:9.4px;line-height:9.4px;font-weight:normal;color:#666;">24 Nov 2025</div>
<div class="tx" style="left:145.00px;width:800px;text-align:center;top:113.62px;font-size:8.5px;line-height:8.5px;font-weight:bold;color:#2f74bd;">Construction</div>
<div class="tx" style="left:223.40px;width:800px;text-align:center;top:39.36px;font-size:9.4px;line-height:9.4px;font-weight:normal;color:#3a3a3a;">Services Rough-In</div>
<div class="tx" style="left:223.40px;width:800px;text-align:center;top:53.36px;font-size:9.4px;line-height:9.4px;font-weight:normal;color:#3a3a3a;">Complete</div>
<div class="abs" style="left:609.30px;top:69.42px;width:28.20px;height:27.80px;background:#17c27a;border-radius:2px"></div>
<svg class="abs" style="left:612.30px;top:72.42px" width="22" height="22" viewBox="0 0 24 24"><path fill="#fff" d="M9 16.17L4.83 12l-1.42 1.41L9 19 21 7l-1.41-1.41z"/></svg>
<div class="abs" style="left:597.10px;top:76.12px;width:8.60px;height:13.60px;background:#e8473b;border-radius:3px"></div>
<div class="tx" style="left:201.40px;width:800px;text-align:center;top:78.43px;font-size:9.2px;line-height:9.2px;font-weight:bold;color:#fff;">7</div>
<div class="tx" style="left:223.40px;width:800px;text-align:center;top:99.16px;font-size:9.4px;line-height:9.4px;font-weight:normal;color:#666;">22 Dec 2025</div>
<div class="tx" style="left:223.40px;width:800px;text-align:center;top:113.62px;font-size:8.5px;line-height:8.5px;font-weight:bold;color:#2f74bd;">Construction</div>
<div class="tx" style="left:301.80px;width:800px;text-align:center;top:39.36px;font-size:9.4px;line-height:9.4px;font-weight:normal;color:#3a3a3a;">Internal Fitout</div>
<div class="tx" style="left:301.80px;width:800px;text-align:center;top:53.36px;font-size:9.4px;line-height:9.4px;font-weight:normal;color:#3a3a3a;">Complete</div>
<div class="abs" style="left:687.70px;top:69.42px;width:28.20px;height:27.80px;background:#2f74bd;border-radius:2px"></div>
<svg class="abs" style="left:689.80px;top:71.42px" width="24" height="24" viewBox="0 0 24 24"><path fill="#fff" d="M12 4V1L8 5l4 4V6c3.31 0 6 2.69 6 6 0 1.01-.25 1.97-.7 2.8l1.46 1.46C19.54 15.03 20 13.57 20 12c0-4.42-3.58-8-8-8zm0 14c-3.31 0-6-2.69-6-6 0-1.01.25-1.97.7-2.8L5.24 7.74C4.46 8.97 4 10.43 4 12c0 4.42 3.58 8 8 8v3l4-4-4-4v3z"/></svg>
<div class="tx" style="left:301.80px;width:800px;text-align:center;top:99.16px;font-size:9.4px;line-height:9.4px;font-weight:normal;color:#666;">6 Apr 2026</div>
<div class="tx" style="left:301.80px;width:800px;text-align:center;top:113.62px;font-size:8.5px;line-height:8.5px;font-weight:bold;color:#2f74bd;">Construction</div>
<div class="tx" style="left:380.20px;width:800px;text-align:center;top:25.36px;font-size:9.4px;line-height:9.4px;font-weight:normal;color:#3a3a3a;">Testing &amp;</div>
<div class="tx" style="left:380.20px;width:800px;text-align:center;top:39.36px;font-size:9.4px;line-height:9.4px;font-weight:normal;color:#3a3a3a;">Commissioning</div>
<div class="tx" style="left:380.20px;width:800px;text-align:center;top:53.36px;font-size:9.4px;line-height:9.4px;font-weight:normal;color:#3a3a3a;">Complete</div>
<div class="abs" style="left:766.10px;top:69.42px;width:28.20px;height:27.80px;background:#fff;border:2px solid #2f74bd;border-radius:2px;box-sizing:border-box"></div>
<div class="tx" style="left:380.20px;width:800px;text-align:center;top:99.16px;font-size:9.4px;line-height:9.4px;font-weight:normal;color:#666;">25 May 2026</div>
<div class="tx" style="left:380.20px;width:800px;text-align:center;top:113.62px;font-size:8.5px;line-height:8.5px;font-weight:bold;color:#2f74bd;">Construction</div>
<div class="tx" style="left:458.60px;width:800px;text-align:center;top:39.36px;font-size:9.4px;line-height:9.4px;font-weight:normal;color:#3a3a3a;">Practical</div>
<div class="tx" style="left:458.60px;width:800px;text-align:center;top:53.36px;font-size:9.4px;line-height:9.4px;font-weight:normal;color:#3a3a3a;">Completion</div>
<div class="abs" style="left:844.50px;top:69.42px;width:28.20px;height:27.80px;background:#fff;border:2px solid #2f74bd;border-radius:2px;box-sizing:border-box"></div>
<div class="tx" style="left:458.60px;width:800px;text-align:center;top:99.16px;font-size:9.4px;line-height:9.4px;font-weight:normal;color:#666;">9 Jun 2026</div>
<div class="tx" style="left:458.60px;width:800px;text-align:center;top:113.62px;font-size:8.5px;line-height:8.5px;font-weight:bold;color:#2f74bd;">DLP</div>
<div class="abs" style="left:1012.50px;top:22.62px;width:6.40px;height:113.00px;background:#f8f8f8"></div>
<div class="abs" style="left:1013.70px;top:23.62px;width:0;height:0;border-left:2.2px solid transparent;border-right:2.2px solid transparent;border-bottom:3px solid #888"></div>
<div class="abs" style="left:1014.00px;top:32.62px;width:3.40px;height:83.00px;background:#8d8d8d;border-radius:2px"></div>
<div class="rz" style="border-color:#555"></div>
</div>
<div class="t" style="left:292.50px;top:721.18px;width:1019.00px;height:119.72px;background:#fff;">
<div class="tx" style="left:9.10px;top:11.08px;font-size:10.8px;line-height:10.8px;font-weight:bold;color:#2b2b2b;">Project Phases</div>
<div class="tx" style="left:9.00px;top:62.37px;font-size:8.8px;line-height:8.8px;font-weight:normal;color:#777;">Jan 2025</div>
<div class="abs" style="left:9.50px;top:74.32px;width:1.00px;height:27.00px;background:repeating-linear-gradient(180deg,#bbb 0 4px,transparent 4px 7px)"></div>
<div class="tx" style="left:-227.40px;width:800px;text-align:center;top:62.37px;font-size:8.8px;line-height:8.8px;font-weight:normal;color:#777;">Apr 2025</div>
<div class="abs" style="left:172.10px;top:74.32px;width:1.00px;height:27.00px;background:#d8d8d8"></div>
<div class="tx" style="left:-61.90px;width:800px;text-align:center;top:62.37px;font-size:8.8px;line-height:8.8px;font-weight:normal;color:#777;">Jul 2025</div>
<div class="abs" style="left:337.60px;top:74.32px;width:1.00px;height:27.00px;background:#d8d8d8"></div>
<div class="tx" style="left:105.30px;width:800px;text-align:center;top:62.37px;font-size:8.8px;line-height:8.8px;font-weight:normal;color:#777;">Oct 2025</div>
<div class="abs" style="left:504.80px;top:74.32px;width:1.00px;height:27.00px;background:#d8d8d8"></div>
<div class="tx" style="left:272.90px;width:800px;text-align:center;top:62.37px;font-size:8.8px;line-height:8.8px;font-weight:normal;color:#777;">Jan 2026</div>
<div class="abs" style="left:672.40px;top:74.32px;width:1.00px;height:27.00px;background:#d8d8d8"></div>
<div class="tx" style="left:436.60px;width:800px;text-align:center;top:62.37px;font-size:8.8px;line-height:8.8px;font-weight:normal;color:#777;">Apr 2026</div>
<div class="abs" style="left:836.10px;top:74.32px;width:1.00px;height:27.00px;background:#d8d8d8"></div>
<div class="tx" style="left:210.70px;width:800px;text-align:right;top:62.37px;font-size:8.8px;line-height:8.8px;font-weight:normal;color:#777;">Jul 2026</div>
<div class="abs" style="left:1008.10px;top:74.32px;width:1.00px;height:27.00px;background:repeating-linear-gradient(180deg,#bbb 0 4px,transparent 4px 7px)"></div>
<div class="abs" style="left:743.00px;top:59.82px;width:1.20px;height:42.00px;background:repeating-linear-gradient(180deg,#555 0 4px,transparent 4px 6.5px)"></div>
<div class="abs" style="left:964.40px;top:59.82px;width:1.20px;height:42.00px;background:repeating-linear-gradient(180deg,#555 0 4px,transparent 4px 6.5px)"></div>
<div class="abs" style="left:44.30px;top:78.22px;width:51.20px;height:18.90px;background:#2d6aa0;border-radius:2px"></div>
<div class="tx" style="left:48.30px;top:83.14px;font-size:8.6px;line-height:8.6px;font-weight:bold;color:#fff;">Inception</div>
<div class="abs" style="left:107.90px;top:78.22px;width:826.10px;height:18.90px;background:#1bbfae;border-radius:3px"></div>
<div class="tx" style="left:111.50px;top:83.14px;font-size:8.6px;line-height:8.6px;font-weight:bold;color:#fff;">Construction</div>
<div class="tx" style="left:343.60px;width:800px;text-align:center;top:33.57px;font-size:8.8px;line-height:8.8px;font-weight:bold;color:#222;">Today</div>
<div class="tx" style="left:343.60px;width:800px;text-align:center;top:47.97px;font-size:8.8px;line-height:8.8px;font-weight:bold;color:#2f74bd;">Construction</div>
<div class="tx" style="left:565.00px;width:800px;text-align:center;top:33.57px;font-size:8.8px;line-height:8.8px;font-weight:bold;color:#222;">Completion</div>
<div class="tx" style="left:565.00px;width:800px;text-align:center;top:47.97px;font-size:8.8px;line-height:8.8px;font-weight:normal;color:#222;">9 Jun 2026</div>
<div class="abs" style="left:960.30px;top:78.42px;width:8.90px;height:18.60px;background:#f8c06a;border-radius:3px"></div>
<div class="rz" style="border-color:#555"></div>
</div>
<div class="t" style="left:1320.30px;top:578.38px;width:333.80px;height:262.52px;background:#fff;">
<div class="tx" style="left:9.10px;top:10.98px;font-size:10.8px;line-height:10.8px;font-weight:bold;color:#2b2b2b;">Budget vs FFC Table</div>
<div class="tx" style="left:16.60px;top:32.96px;font-size:9.4px;line-height:9.4px;font-weight:bold;color:#222;">Name</div>
<div class="tx" style="left:-484.30px;width:800px;text-align:right;top:32.96px;font-size:9.4px;line-height:9.4px;font-weight:bold;color:#222;">Amount</div>
<div class="abs" style="left:9.10px;top:50.12px;width:308.80px;height:1.00px;background:#e6e6e6"></div>
<div class="abs" style="left:9.10px;top:50.62px;width:308.80px;height:26.30px;background:#fafafa;border-bottom:1px solid #e3e3e3;box-sizing:border-box"></div>
<div class="tx" style="left:41.70px;top:59.69px;font-size:9.6px;line-height:9.6px;font-weight:normal;color:#333;">Budget</div>
<div class="tx" style="left:-483.80px;width:800px;text-align:right;top:59.22px;font-size:9.8px;line-height:9.8px;font-weight:normal;color:#333;font-family:'Liberation Mono',monospace;letter-spacing:0px;">8,750,000</div>
<div class="abs" style="left:9.10px;top:76.92px;width:308.80px;height:26.30px;background:#f3f3f3;border-bottom:1px solid #e3e3e3;box-sizing:border-box"></div>
<div class="tx" style="left:41.70px;top:85.99px;font-size:9.6px;line-height:9.6px;font-weight:normal;color:#333;">Forecast Final Cost</div>
<div class="tx" style="left:-483.80px;width:800px;text-align:right;top:85.52px;font-size:9.8px;line-height:9.8px;font-weight:normal;color:#333;font-family:'Liberation Mono',monospace;letter-spacing:0px;">6,188,369</div>
<svg class="abs" style="left:19.70px;top:81.92px" width="16" height="16" viewBox="0 0 24 24"><path fill="#555" d="M8.59 16.59L13.17 12 8.59 7.41 10 6l6 6-6 6-1.41-1.41z"/></svg>
<div class="abs" style="left:9.10px;top:103.22px;width:308.80px;height:24.90px;background:#fafafa;border-bottom:1px solid #e3e3e3;box-sizing:border-box"></div>
<div class="tx" style="left:41.70px;top:112.29px;font-size:9.6px;line-height:9.6px;font-weight:normal;color:#333;">Upper Variance</div>
<div class="tx" style="left:-483.80px;width:800px;text-align:right;top:111.82px;font-size:9.8px;line-height:9.8px;font-weight:normal;color:#2e9a3a;font-family:'Liberation Mono',monospace;letter-spacing:0px;font-weight:bold;">2,561,631</div>
<div class="abs" style="left:9.10px;top:128.12px;width:308.80px;height:26.30px;background:#f3f3f3;border-bottom:1px solid #e3e3e3;box-sizing:border-box"></div>
<div class="tx" style="left:41.70px;top:137.19px;font-size:9.6px;line-height:9.6px;font-weight:normal;color:#333;">Lower Variance</div>
<div class="tx" style="left:-483.80px;width:800px;text-align:right;top:136.72px;font-size:9.8px;line-height:9.8px;font-weight:normal;color:#2e9a3a;font-family:'Liberation Mono',monospace;letter-spacing:0px;font-weight:bold;">2,561,631</div>
<div class="abs" style="left:9.10px;top:154.42px;width:308.80px;height:25.60px;background:#fafafa;border-bottom:1px solid #e3e3e3;box-sizing:border-box"></div>
<div class="tx" style="left:41.70px;top:163.49px;font-size:9.6px;line-height:9.6px;font-weight:normal;color:#333;">Paid to Date</div>
<div class="tx" style="left:-483.80px;width:800px;text-align:right;top:163.02px;font-size:9.8px;line-height:9.8px;font-weight:normal;color:#333;font-family:'Liberation Mono',monospace;letter-spacing:0px;">515,000</div>
<div class="abs" style="left:319.00px;top:24.62px;width:0;height:0;border-left:2.2px solid transparent;border-right:2.2px solid transparent;border-bottom:3px solid #888"></div>
<div class="abs" style="left:319.00px;top:245.62px;width:0;height:0;border-left:2.2px solid transparent;border-right:2.2px solid transparent;border-top:3px solid #888"></div>
<div class="rz" style="border-color:#555"></div>
</div>
<div class="t" style="left:292.50px;top:849.70px;width:333.80px;height:162.56px;background:#fff;">
<div class="tx" style="left:8.90px;top:9.96px;font-size:10.8px;line-height:10.8px;font-weight:bold;color:#2b2b2b;">7 risks split by Post-Treatment rating</div>
</div>
<div class="t" style="left:635.10px;top:849.70px;width:333.80px;height:162.56px;background:#fff;">
<div class="tx" style="left:9.10px;top:9.96px;font-size:10.8px;line-height:10.8px;font-weight:bold;color:#2b2b2b;">Risk Table</div>
<div class="tx" style="left:16.40px;top:31.44px;font-size:9.4px;line-height:9.4px;font-weight:bold;color:#222;">Title</div>
<div class="tx" style="left:201.20px;top:31.44px;font-size:9.4px;line-height:9.4px;font-weight:bold;color:#222;">Post-...</div>
<svg class="abs" style="left:244.90px;top:28.30px" width="14" height="14" viewBox="0 0 24 24"><path fill="#666" d="M20 12l-1.41-1.41L13 16.17V4h-2v12.17l-5.58-5.59L4 12l8 8 8-8z"/></svg>
<div class="abs" style="left:9.10px;top:48.50px;width:308.60px;height:25.50px;background:#f3f3f3"></div>
<svg class="abs" style="left:19.90px;top:53.25px" width="16" height="16" viewBox="0 0 24 24"><path fill="#555" d="M8.59 16.59L13.17 12 8.59 7.41 10 6l6 6-6 6-1.41-1.41z"/></svg>
<div class="abs" style="left:41.30px;top:54.05px;width:14.40px;height:14.40px;border-radius:50%;background:#f5b82e"></div>
<div class="tx" style="left:-351.50px;width:800px;text-align:center;top:57.48px;font-size:8px;line-height:8px;font-weight:bold;color:#fff4d0;">R</div>
<div class="abs" style="left:64.00px;top:53.25px;width:130.6px;height:14px;overflow:hidden"></div>
<div class="tx" style="left:64.00px;top:57.32px;font-size:9.6px;line-height:9.6px;font-weight:normal;color:#333;width:130.6px;overflow:hidden;">Underground utilities not map</div>
<div class="abs" style="left:209.20px;top:53.45px;width:41.10px;height:15.60px;border:1px solid #e0a57a;border-radius:8px;box-sizing:border-box;background:#fff"></div>
<div class="abs" style="left:211.50px;top:55.25px;width:12.00px;height:12.00px;border-radius:50%;background:#c8772e"></div>
<div class="tx" style="left:225.90px;top:57.36px;font-size:9.2px;line-height:9.2px;font-weight:normal;color:#d2823a;">High</div>
<svg class="abs" style="left:19.90px;top:78.75px" width="16" height="16" viewBox="0 0 24 24"><path fill="#555" d="M8.59 16.59L13.17 12 8.59 7.41 10 6l6 6-6 6-1.41-1.41z"/></svg>
<div class="abs" style="left:41.30px;top:79.55px;width:14.40px;height:14.40px;border-radius:50%;background:#f5b82e"></div>
<div class="tx" style="left:-351.50px;width:800px;text-align:center;top:82.98px;font-size:8px;line-height:8px;font-weight:bold;color:#fff4d0;">R</div>
<div class="abs" style="left:64.00px;top:78.75px;width:130.6px;height:14px;overflow:hidden"></div>
<div class="tx" style="left:64.00px;top:82.82px;font-size:9.6px;line-height:9.6px;font-weight:normal;color:#333;width:130.6px;overflow:hidden;">Main contractor cash flow issue</div>
<div class="abs" style="left:201.90px;top:78.95px;width:55.70px;height:15.60px;border:1px solid #f0c478;border-radius:8px;box-sizing:border-box;background:#fff"></div>
<div class="abs" style="left:204.20px;top:80.75px;width:12.00px;height:12.00px;border-radius:50%;background:#f5b430"></div>
<div class="tx" style="left:218.30px;top:82.86px;font-size:9.2px;line-height:9.2px;font-weight:normal;color:#eaa52a;">Medium</div>
<div class="abs" style="left:9.10px;top:99.50px;width:308.60px;height:26.20px;background:#f3f3f3"></div>
<svg class="abs" style="left:19.90px;top:104.60px" width="16" height="16" viewBox="0 0 24 24"><path fill="#555" d="M8.59 16.59L13.17 12 8.59 7.41 10 6l6 6-6 6-1.41-1.41z"/></svg>
<div class="abs" style="left:41.30px;top:105.40px;width:14.40px;height:14.40px;border-radius:50%;background:#f5b82e"></div>
<div class="tx" style="left:-351.50px;width:800px;text-align:center;top:108.83px;font-size:8px;line-height:8px;font-weight:bold;color:#fff4d0;">R</div>
<div class="abs" style="left:64.00px;top:104.60px;width:200px;height:14px;overflow:hidden"></div>
<div class="tx" style="left:64.00px;top:108.67px;font-size:9.6px;line-height:9.6px;font-weight:normal;color:#333;">Steel delivery delays <span style="margin-left:3px">(3)</span></div>
<div class="abs" style="left:201.90px;top:104.80px;width:55.70px;height:15.60px;border:1px solid #f0c478;border-radius:8px;box-sizing:border-box;background:#fff"></div>
<div class="abs" style="left:204.20px;top:106.60px;width:12.00px;height:12.00px;border-radius:50%;background:#f5b430"></div>
<div class="tx" style="left:218.30px;top:108.71px;font-size:9.2px;line-height:9.2px;font-weight:normal;color:#eaa52a;">Medium</div>
<svg class="abs" style="left:19.90px;top:130.50px" width="16" height="16" viewBox="0 0 24 24"><path fill="#555" d="M8.59 16.59L13.17 12 8.59 7.41 10 6l6 6-6 6-1.41-1.41z"/></svg>
<div class="abs" style="left:41.30px;top:131.30px;width:14.40px;height:14.40px;border-radius:50%;background:#f5b82e"></div>
<div class="tx" style="left:-351.50px;width:800px;text-align:center;top:134.73px;font-size:8px;line-height:8px;font-weight:bold;color:#fff4d0;">R</div>
<div class="abs" style="left:64.00px;top:130.50px;width:200px;height:14px;overflow:hidden"></div>
<div class="tx" style="left:64.00px;top:134.57px;font-size:9.6px;line-height:9.6px;font-weight:normal;color:#333;">Design errors and omissions <span style="margin-left:3px">(3)</span></div>
<div class="abs" style="left:201.90px;top:130.70px;width:55.70px;height:15.60px;border:1px solid #f0c478;border-radius:8px;box-sizing:border-box;background:#fff"></div>
<div class="abs" style="left:204.20px;top:132.50px;width:12.00px;height:12.00px;border-radius:50%;background:#f5b430"></div>
<div class="tx" style="left:218.30px;top:134.61px;font-size:9.2px;line-height:9.2px;font-weight:normal;color:#eaa52a;">Medium</div>
<div class="abs" style="left:318.40px;top:24.30px;width:0;height:0;border-left:2.2px solid transparent;border-right:2.2px solid transparent;border-bottom:3px solid #888"></div>
</div>
<div class="t" style="left:977.70px;top:849.70px;width:676.40px;height:162.56px;background:#fff;">
<div class="tx" style="left:9.70px;top:10.21px;font-size:10.5px;line-height:10.5px;font-weight:bold;color:#2b2b2b;">Cash Flow</div>
<div class="tx" style="left:-784.20px;width:800px;text-align:right;top:27.45px;font-size:7.5px;line-height:7.5px;font-weight:normal;color:#666;">1</div>
<div class="abs" style="left:18.30px;top:29.60px;width:645.40px;height:1.00px;background:#e6e6e6"></div>
<div class="abs" style="left:23.60px;top:30.10px;width:1.00px;height:120.00px;background:#bdbdbd"></div>
<div class="abs" style="left:49.20px;top:30.10px;width:1.00px;height:120.00px;background:#ececec"></div>
<div class="abs" style="left:74.81px;top:30.10px;width:1.00px;height:120.00px;background:#ececec"></div>
<div class="abs" style="left:100.41px;top:30.10px;width:1.00px;height:120.00px;background:#ececec"></div>
<div class="abs" style="left:126.02px;top:30.10px;width:1.00px;height:120.00px;background:#ececec"></div>
<div class="abs" style="left:151.62px;top:30.10px;width:1.00px;height:120.00px;background:#ececec"></div>
<div class="abs" style="left:177.23px;top:30.10px;width:1.00px;height:120.00px;background:#ececec"></div>
<div class="abs" style="left:202.83px;top:30.10px;width:1.00px;height:120.00px;background:#ececec"></div>
<div class="abs" style="left:228.44px;top:30.10px;width:1.00px;height:120.00px;background:#ececec"></div>
<div class="abs" style="left:254.04px;top:30.10px;width:1.00px;height:120.00px;background:#ececec"></div>
<div class="abs" style="left:279.65px;top:30.10px;width:1.00px;height:120.00px;background:#ececec"></div>
<div class="abs" style="left:305.25px;top:30.10px;width:1.00px;height:120.00px;background:#ececec"></div>
<div class="abs" style="left:330.86px;top:30.10px;width:1.00px;height:120.00px;background:#ececec"></div>
<div class="abs" style="left:356.46px;top:30.10px;width:1.00px;height:120.00px;background:#ececec"></div>
<div class="abs" style="left:382.07px;top:30.10px;width:1.00px;height:120.00px;background:#ececec"></div>
<div class="abs" style="left:407.67px;top:30.10px;width:1.00px;height:120.00px;background:#ececec"></div>
<div class="abs" style="left:433.28px;top:30.10px;width:1.00px;height:120.00px;background:#ececec"></div>
<div class="abs" style="left:458.88px;top:30.10px;width:1.00px;height:120.00px;background:#ececec"></div>
<div class="abs" style="left:484.49px;top:30.10px;width:1.00px;height:120.00px;background:#ececec"></div>
<div class="abs" style="left:510.10px;top:30.10px;width:1.00px;height:120.00px;background:#ececec"></div>
<div class="abs" style="left:535.70px;top:30.10px;width:1.00px;height:120.00px;background:#ececec"></div>
<div class="abs" style="left:561.31px;top:30.10px;width:1.00px;height:120.00px;background:#ececec"></div>
<div class="abs" style="left:586.91px;top:30.10px;width:1.00px;height:120.00px;background:#ececec"></div>
<div class="abs" style="left:612.51px;top:30.10px;width:1.00px;height:120.00px;background:#ececec"></div>
<div class="abs" style="left:638.12px;top:30.10px;width:1.00px;height:120.00px;background:#ececec"></div>
<div class="abs" style="left:663.72px;top:30.10px;width:1.00px;height:120.00px;background:#ececec"></div>
</div>
<svg class="abs" style="left:0;top:0;z-index:50" width="220" height="450" viewBox="0 0 220 450"><path d="M181.6 407.6 L181.6 427.4 L186.3 423.4 L189.9 430.6 L192.5 429.3 L189.3 422.6 L195.3 421.9 Z" fill="#fff" stroke="#111" stroke-width="1.15" stroke-linejoin="round"/></svg>
<div class="abs" style="left:55px;top:987px;width:1829px;height:6px;background:#e1e8f1"></div>
<div class="abs" style="left:288px;top:203px;width:1370px;height:1px;background:repeating-linear-gradient(90deg,#606060 0 4px,transparent 4px 5.74px)"></div>
<div class="abs" style="left:288px;top:203px;width:1px;height:784px;background:repeating-linear-gradient(180deg,#9c9c9c 0 3px,transparent 3px 6px)"></div>
<div class="abs" style="left:1657.3px;top:203px;width:1px;height:784px;background:repeating-linear-gradient(180deg,#9c9c9c 0 3px,transparent 3px 6px)"></div>
<div class="abs" style="left:1884px;top:203px;width:19px;height:783px;background:#fbfbfb"></div>
<div class="abs" style="left:1889px;top:211px;width:0;height:0;border-left:4.7px solid transparent;border-right:4.7px solid transparent;border-bottom:7px solid #8a8a8a"></div>
<div class="abs" style="left:1888px;top:226px;width:11px;height:497.5px;background:#8c8c8c;border-radius:6px"></div>
<div class="abs" style="left:1889px;top:972px;width:0;height:0;border-left:4.7px solid transparent;border-right:4.7px solid transparent;border-top:7px solid #8a8a8a"></div>
</div>
<div id="frame"></div>
</body></html>
